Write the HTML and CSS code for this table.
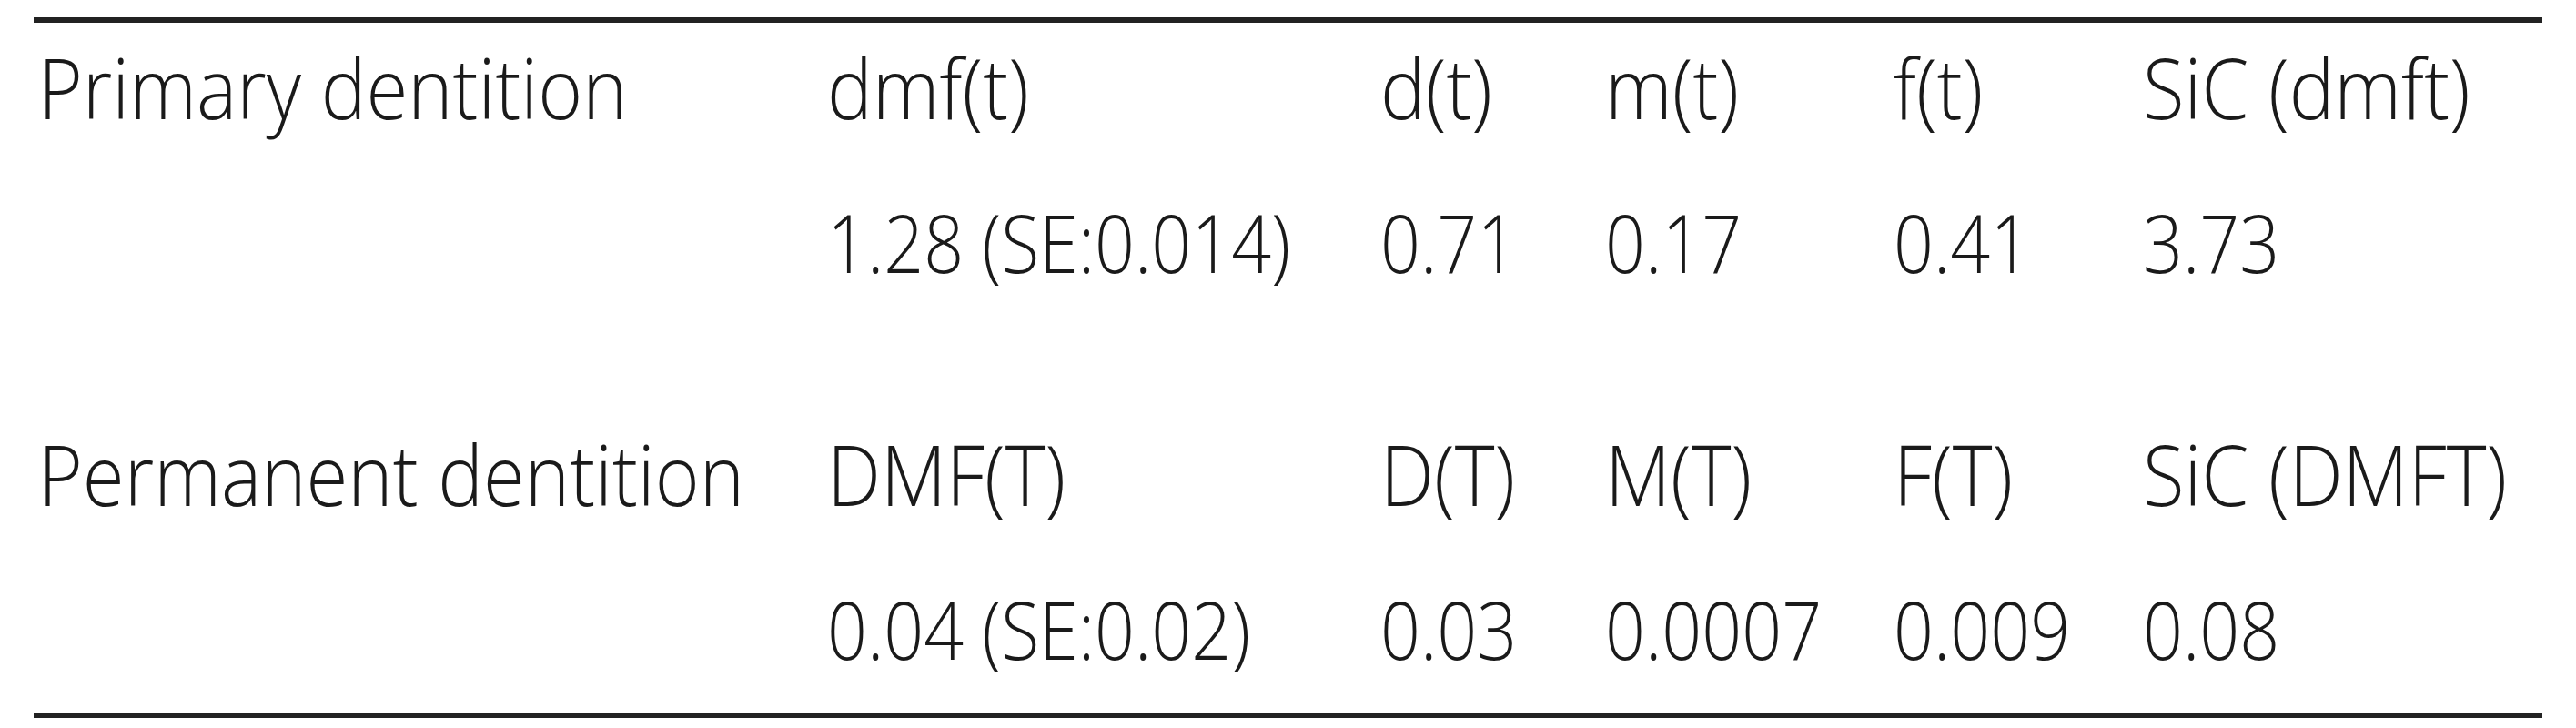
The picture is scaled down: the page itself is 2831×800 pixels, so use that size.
FILE: index.html
```html
<!DOCTYPE html>
<html lang="en">
<head>
<meta charset="utf-8">
<title>Dental caries indices</title>
<link rel="stylesheet" href="styles.css">
</head>
<body>
<div class="table">
  <div class="group">
    <div class="row head">
      <div class="cell"><span class="txt">Primary dentition</span></div>
      <div class="cell"><span class="txt">dmf(t)</span></div>
      <div class="cell"><span class="txt">d(t)</span></div>
      <div class="cell"><span class="txt">m(t)</span></div>
      <div class="cell"><span class="txt">f(t)</span></div>
      <div class="cell"><span class="txt">SiC (dmft)</span></div>
    </div>
    <div class="row vals">
      <div class="cell"></div>
      <div class="cell"><span class="txt">1.28 (SE:0.014)</span></div>
      <div class="cell"><span class="txt">0.71</span></div>
      <div class="cell"><span class="txt">0.17</span></div>
      <div class="cell"><span class="txt">0.41</span></div>
      <div class="cell"><span class="txt">3.73</span></div>
    </div>
  </div>
  <div class="group">
    <div class="row head">
      <div class="cell"><span class="txt">Permanent dentition</span></div>
      <div class="cell"><span class="txt">DMF(T)</span></div>
      <div class="cell"><span class="txt">D(T)</span></div>
      <div class="cell"><span class="txt">M(T)</span></div>
      <div class="cell"><span class="txt">F(T)</span></div>
      <div class="cell"><span class="txt">SiC (DMFT)</span></div>
    </div>
    <div class="row vals">
      <div class="cell"></div>
      <div class="cell"><span class="txt">0.04 (SE:0.02)</span></div>
      <div class="cell"><span class="txt">0.03</span></div>
      <div class="cell"><span class="txt">0.0007</span></div>
      <div class="cell"><span class="txt">0.009</span></div>
      <div class="cell"><span class="txt">0.08</span></div>
    </div>
  </div>
</div>
</body>
</html>
```
FILE: styles.css
```css
html, body {
  margin: 0;
  padding: 0;
  background: #ffffff;
}

body {
  font-family: "Open Sans", "Liberation Sans", sans-serif;
  font-weight: 350;
  color: #1a1a1a;
}

.table {
  box-sizing: border-box;
  width: 2757px;
  margin: 19px 0 0 37px;
  border-top: 6px solid #222222;
  border-bottom: 6px solid #222222;
  padding: 34.7px 0 48px 5px;
  display: flex;
  flex-direction: column;
  gap: 175px;
}

.group {
  display: flex;
  flex-direction: column;
  gap: 94px;
}

.row {
  display: grid;
  grid-template-columns: 867px 608px 247px 317px 274px 1fr;
  height: 78px;
}

.cell {
  line-height: 78px;
  white-space: nowrap;
}

.head .cell {
  font-size: 83.5px;
}

.vals .cell {
  font-size: 77px;
}

.txt {
  display: inline-block;
  transform-origin: left calc(39px + 0.388em);
}

.head .txt {
  transform: scaleY(1.107);
}

.vals .txt {
  transform: scaleY(1.146);
}
```
